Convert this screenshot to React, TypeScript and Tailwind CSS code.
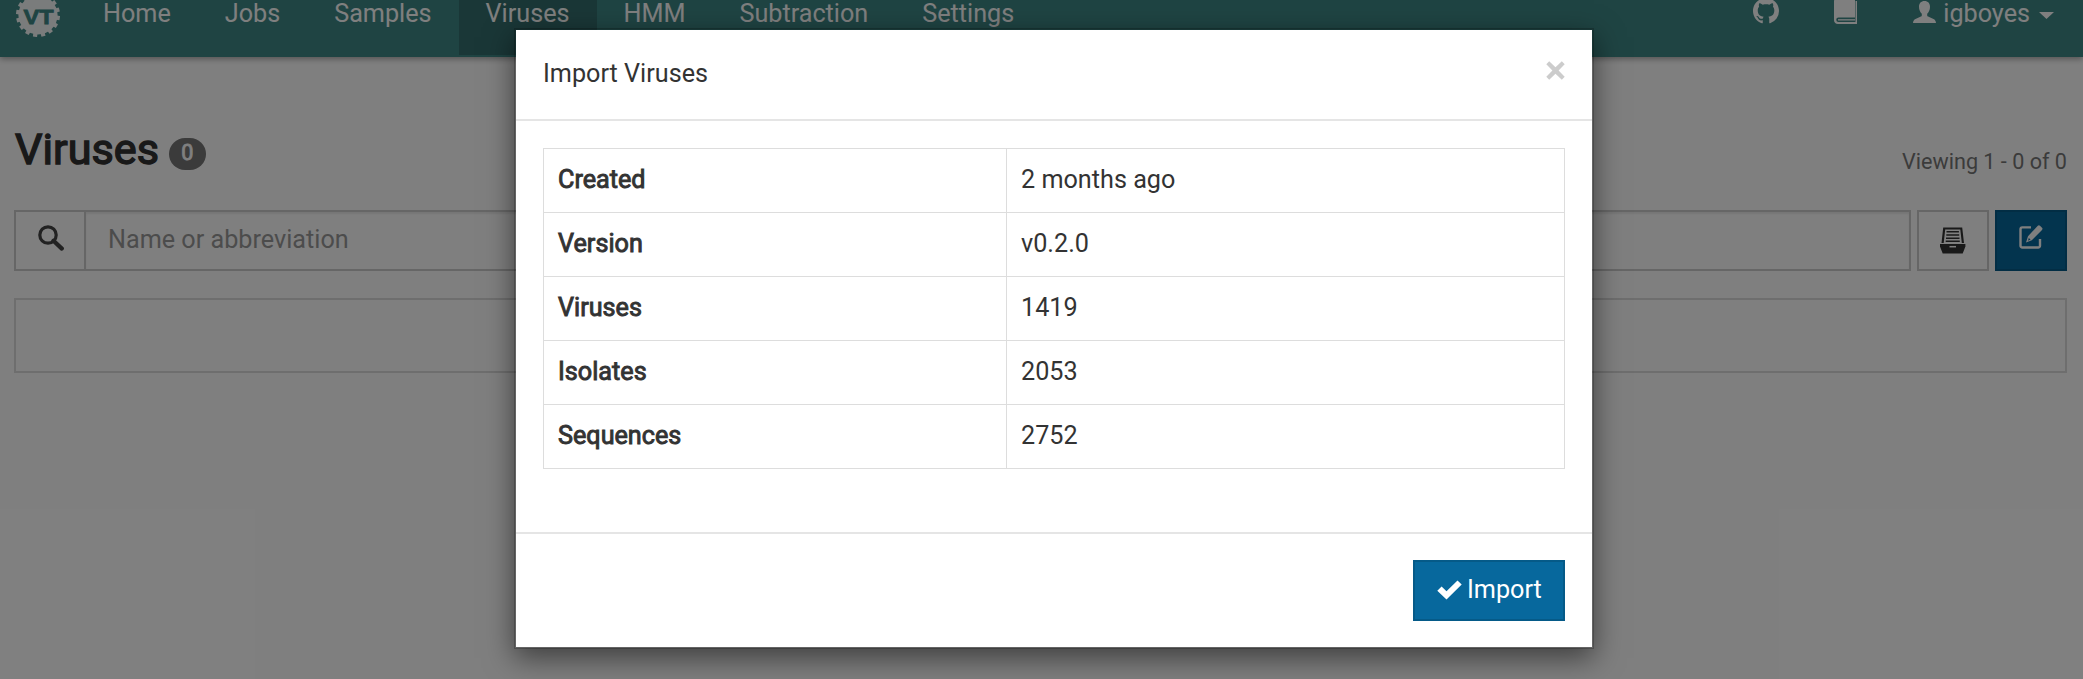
import React from "react";

const navItems = ["Home", "Jobs", "Samples", "Viruses", "HMM", "Subtraction", "Settings"];

const rows = [
  ["Created", "2 months ago"],
  ["Version", "v0.2.0"],
  ["Viruses", "1419"],
  ["Isolates", "2053"],
  ["Sequences", "2752"],
];

function Logo() {
  const teeth = Array.from({ length: 16 }, (_, i) => i * 22.5 + 8);
  return (
    <svg className="block size-[44px] shrink-0" viewBox="-22 -22 44 44">
      <circle r="19.6" fill="#f4f8f8" />
      {teeth.map((a) => (
        <rect key={a} x="-2.1" y="-22" width="4.2" height="5" fill="#f4f8f8" transform={`rotate(${a})`} />
      ))}
      <text x="-14.5" y="9.3" fontFamily="Liberation Sans, sans-serif" fontWeight="700" fontSize="20.5" textLength="30" lengthAdjust="spacingAndGlyphs" fill="#3e8886" stroke="#3e8886" strokeWidth="0.8">VT</text>
    </svg>
  );
}

function GithubIcon() {
  return (
    <svg className="block size-[26px]" viewBox="0 0 16 16">
      <path
        fill="#fff"
        d="M8 0C3.58 0 0 3.58 0 8c0 3.54 2.29 6.53 5.47 7.59.4.07.55-.17.55-.38 0-.19-.01-.82-.01-1.49-2.01.37-2.53-.49-2.69-.94-.09-.23-.48-.94-.82-1.13-.28-.15-.68-.52-.01-.53.63-.01 1.08.58 1.23.82.72 1.21 1.87.87 2.33.66.07-.52.28-.87.51-1.07-1.78-.2-3.64-.89-3.64-3.95 0-.87.31-1.59.82-2.15-.08-.2-.36-1.02.08-2.12 0 0 .67-.21 2.2.82.64-.18 1.32-.27 2-.27s1.36.09 2 .27c1.53-1.04 2.2-.82 2.2-.82.44 1.1.16 1.92.08 2.12.51.56.82 1.27.82 2.15 0 3.07-1.87 3.75-3.65 3.95.29.25.54.73.54 1.48 0 1.07-.01 1.93-.01 2.2 0 .21.15.46.55.38A8.01 8.01 0 0 0 16 8c0-4.42-3.58-8-8-8z"
      />
    </svg>
  );
}

function BookIcon() {
  return (
    <svg className="block h-[27px] w-[24px]" viewBox="0 0 24 27">
      <path d="M3.5 0H21V19.5H4.5a2 2 0 0 0 0 4.5H21.5V3H23V26H4A3.8 3.8 0 0 1 0 22.2V3.5A3.5 3.5 0 0 1 3.5 0Z" fill="#fff" />
      <path d="M4 21.2H21V22.5H4Z" fill="#fff" />
    </svg>
  );
}

function UserIcon() {
  return (
    <svg className="block h-[22px] w-[23px]" viewBox="0 0 23 22">
      <path d="M11.5 0C15 0 17 2.4 17 5.8c0 3-1.2 5.6-2.8 7v1.6c0 .6.3 1 .9 1.2l5.4 2.3c1.4.6 2.3 1.7 2.5 4.1H0c.2-2.4 1.1-3.5 2.5-4.1l5.4-2.3c.6-.2.9-.6.9-1.2v-1.6C7.2 11.4 6 8.8 6 5.8 6 2.4 8 0 11.5 0Z" fill="#fff" />
    </svg>
  );
}

function SearchIcon() {
  return (
    <svg className="block size-[26px]" viewBox="0 0 26 26">
      <circle cx="10" cy="10" r="8.2" fill="none" stroke="#444" strokeWidth="3.2" />
      <path d="M15.5 15.8L23.8 23.6" stroke="#444" strokeWidth="4.2" strokeLinecap="round" />
    </svg>
  );
}

function DrawerIcon() {
  return (
    <svg className="block h-[27px] w-[26px]" viewBox="0 0 26 27">
      <path d="M3.2 0.5H22.2L24 16H21.8L20.3 2.5H5.2L3.7 16H1.5Z" fill="#333" />
      <path d="M6.5 4.8H18.9M6.3 8H19.2M6 11.2H19.5M5.7 14.3H19.8" stroke="#333" strokeWidth="1.6" />
      <path d="M0 17H25.4V19.5L22.7 26.5H2.7L0 19.5Z" fill="#333" />
      <path d="M9.5 19.7H16" stroke="#fff" strokeWidth="1.5" />
    </svg>
  );
}

function EditIcon() {
  return (
    <svg className="block size-[24px]" viewBox="0 0 24 24">
      <path d="M12 2.4H3.3A1.8 1.8 0 0 0 1.5 4.2V20.7A1.8 1.8 0 0 0 3.3 22.5H19.2A1.8 1.8 0 0 0 21 20.7V14" fill="none" stroke="#fff" strokeWidth="2.4" />
      <path fillRule="evenodd" d="M18.8 0.7A1.6 1.6 0 0 1 21 0.7L23 2.7A1.6 1.6 0 0 1 23 4.9L12.8 15.2L7 17.6L9 11.3ZM9.8 13L9 15.7L11.6 14.5Z" fill="#fff" />
    </svg>
  );
}

function CheckIcon() {
  return (
    <svg className="block h-[20px] w-[25px]" viewBox="0 0 25 20">
      <path d="M0.3 10.8L4.6 6.6L9.5 11.3L20.5 0.4L24.7 4.4L9.5 19.6Z" fill="#fff" />
    </svg>
  );
}

function CloseIcon() {
  return (
    <svg className="block size-[19px]" viewBox="0 0 19 19">
      <path d="M3.2 0.3L9.5 6.3L15.8 0.3L18.7 3.2L12.6 9.5L18.7 15.8L15.8 18.7L9.5 12.7L3.2 18.7L0.3 15.8L6.4 9.5L0.3 3.2Z" fill="#ccc" />
    </svg>
  );
}

function Page() {
  return (
    <div className="flex flex-col">
      <header className="flex h-[57px] items-start justify-between bg-[#3e8886] pl-4 text-[25.2px] leading-[36px] text-white shadow-[0_2px_6px_rgba(0,0,0,0.35)]">
        <div className="flex items-start">
          <div className="-mt-[7px] mr-[16px]">
            <Logo />
          </div>
          <nav className="flex">
            {navItems.map((item) => (
              <a
                key={item}
                className={
                  item === "Viruses"
                    ? "flex h-[55px] items-start bg-[#346f6e] px-[27px]"
                    : "flex h-[55px] items-start px-[27px]"
                }
              >
                <span className="-mt-[4px]">{item}</span>
              </a>
            ))}
          </nav>
        </div>
        <div className="flex items-start pr-[29px]">
          <div className="-mt-[2px]">
            <GithubIcon />
          </div>
          <div className="-mt-[2px] ml-[55px]">
            <BookIcon />
          </div>
          <div className="mt-[0.5px] ml-[55px]">
            <UserIcon />
          </div>
          <span className="-mt-[4px] ml-[7px]">igboyes</span>
          <svg className="mt-[12px] ml-[9px] h-[7px] w-[15px]" viewBox="0 0 15 7">
            <path d="M0 0H15L7.5 7Z" fill="#fff" />
          </svg>
        </div>
      </header>

      <main className="pr-[16px] pl-[14px]">
        <div className="flex h-[153px] items-end justify-between">
          <div className="flex items-end pb-[33px] pl-px">
            <h1 className="text-[43.2px] leading-[54px] text-[#333] [-webkit-text-stroke:1.4px_#333]">Viruses</h1>
            <span className="mb-[7px] ml-[10px] flex h-[32px] w-[37px] items-center justify-center rounded-[18px] bg-[#777] pb-[3px] text-[21.6px] leading-none text-white [-webkit-text-stroke:0.8px_#fff]">
              0
            </span>
          </div>
          <span className="pb-[33px] text-[21.6px] leading-[30px] text-[#777]">Viewing 1 - 0 of 0</span>
        </div>

        <div className="flex h-[61px] gap-[6px]">
          <div className="flex flex-1 border-2 border-[#ccc]">
            <div className="flex w-[70px] justify-center border-r-2 border-[#ccc] pt-[12.5px] pl-px">
              <SearchIcon />
            </div>
            <div className="flex flex-1 items-center pb-[2px] pl-[22px] text-[25.2px] leading-none text-[#999] shadow-[inset_0_2px_2px_rgba(0,0,0,0.08)]">
              Name or abbreviation
            </div>
          </div>
          <button className="flex w-[72px] justify-center border-2 border-[#ccc] pt-[15px]">
            <DrawerIcon />
          </button>
          <button className="flex w-[72px] justify-center border-2 border-[#055a88] bg-[#07689d] pt-[13px]">
            <EditIcon />
          </button>
        </div>

        <div className="mt-[27px] h-[75px] border-2 border-[#ddd]" />
      </main>
    </div>
  );
}

function ImportDialog() {
  return (
    <div role="dialog" className="h-[621px] w-[1080px] border-2 border-black/20 bg-white bg-clip-padding shadow-[0_9px_27px_rgba(0,0,0,0.5)]">
      <div className="flex h-[91px] items-start justify-between border-b-2 border-[#e5e5e5] px-[27px]">
        <h4 className="pt-[26px] text-[25.2px] leading-[36px]">Import Viruses</h4>
        <button className="mt-[30.5px]">
          <CloseIcon />
        </button>
      </div>
      <div className="h-[411px] px-[27px] pt-[27px]">
        <table className="w-[1022px] table-fixed border-collapse text-[25.2px] leading-[36px]">
          <tbody>
            {rows.map(([label, value]) => (
              <tr key={label} className="h-[64px]">
                <th className="w-[463px] border border-[#ddd] px-[14px] pb-[1px] text-left font-normal [-webkit-text-stroke:0.9px_#333]">{label}</th>
                <td className="border border-[#ddd] px-[14px] pb-[1px]">{value}</td>
              </tr>
            ))}
          </tbody>
        </table>
      </div>
      <div className="flex justify-end border-t-2 border-[#e5e5e5] px-[27px] pt-[26px]">
        <button className="flex h-[61px] w-[152px] items-start border-2 border-[#055a88] bg-[#07689d] pl-[22px] text-[25.2px] leading-[36px] text-white">
          <span className="mt-[18px]">
            <CheckIcon />
          </span>
          <span className="mt-[10px] ml-[5px]">Import</span>
        </button>
      </div>
    </div>
  );
}

export default function App() {
  return (
    <div className="relative h-[679px] w-full overflow-hidden bg-white font-['Roboto',sans-serif] text-[#333]">
      <Page />
      <div className="absolute inset-0 flex items-start bg-black/50 pt-[28px] pl-[514px]">
        <ImportDialog />
      </div>
    </div>
  );
}
